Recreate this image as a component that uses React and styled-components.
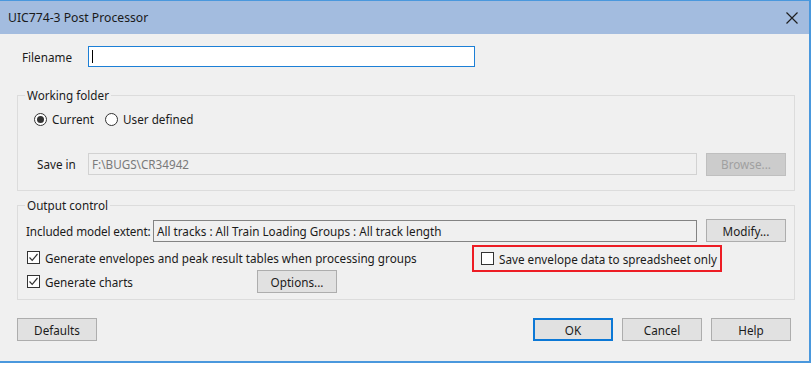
import React from "react";
import styled, { createGlobalStyle } from "styled-components";

const GlobalStyle = createGlobalStyle`
  html, body {
    margin: 0;
    padding: 0;
    background: #ffffff;
  }
  body {
    font-family: "Noto Sans", "Open Sans", sans-serif;
    font-size: 11.7px;
    color: #1b1b1b;
  }
`;

const Window = styled.div`
  width: 809px;
  height: 360px;
  display: flex;
  flex-direction: column;
  background: #f0f0f0;
  border-top: 1px solid #4a98dd;
  border-right: 2px solid #4a98dd;
  border-bottom: 2px solid #4a98dd;
`;

const TitleBar = styled.div`
  height: 33px;
  flex: none;
  display: flex;
  align-items: center;
  justify-content: space-between;
  background: #a3bcdf;
  padding: 0 11px 0 8px;
  font-size: 12.2px;
  color: #1a1a1a;
`;

const Body = styled.div`
  flex: 1;
  display: flex;
  flex-direction: column;
  padding: 0 14px 0 17px;
`;

const Row = styled.div`
  display: flex;
  align-items: center;
  height: ${p => p.h || 22}px;
  margin-top: ${p => p.mt || 0}px;
  padding-left: ${p => p.pl || 0}px;
`;

const Label = styled.span`
  width: ${p => p.w}px;
  flex: none;
  white-space: nowrap;
  letter-spacing: ${p => p.ls || 0}px;
`;

const TextBox = styled.div`
  width: ${p => p.w}px;
  height: ${p => p.h || 22}px;
  box-sizing: border-box;
  display: flex;
  align-items: center;
  padding-left: 3px;
  white-space: nowrap;
  overflow: hidden;
  background: ${p => (p.variant === "edit" ? "#ffffff" : "#f0f0f0")};
  border: 1px solid
    ${p =>
      p.variant === "edit" ? "#1c7fd6" : p.variant === "disabled" ? "#d2d2d2" : "#838383"};
  color: ${p => (p.variant === "disabled" ? "#7a7a7a" : "#1b1b1b")};
`;

const Caret = styled.span`
  width: 1px;
  height: 13px;
  background: #000;
`;

const Button = styled.div`
  width: 80px;
  height: 23px;
  box-sizing: border-box;
  flex: none;
  display: flex;
  align-items: center;
  justify-content: center;
  background: ${p => (p.disabled ? "#cccccc" : "#e1e1e1")};
  border: 1px solid ${p => (p.primary ? "#0c78d6" : p.disabled ? "#bfbfbf" : "#adadad")};
  box-shadow: ${p => (p.primary ? "inset 0 0 0 1px #0c78d6" : "none")};
  color: ${p => (p.disabled ? "#a0a0a0" : "#1b1b1b")};
  margin-left: ${p => p.ml || 0}px;
`;

const Group = styled.fieldset`
  margin: ${p => p.mt || 0}px 0 0 0;
  padding: 0;
  border: 1px solid #dcdcdc;
  min-width: 0;
`;

const Legend = styled.legend`
  margin-left: 7px;
  padding: 0 2px;
  line-height: 16px;
`;

const GroupBody = styled.div`
  display: flex;
  flex-direction: column;
  padding-bottom: ${p => p.pb || 0}px;
`;

const RadioItem = styled.label`
  display: flex;
  align-items: center;
  gap: 5px;
  margin-right: 11px;
`;

const RadioDot = styled.span`
  width: 13px;
  height: 13px;
  box-sizing: border-box;
  border-radius: 50%;
  border: 1px solid #333333;
  background: #ffffff;
  display: flex;
  align-items: center;
  justify-content: center;
  &::after {
    content: "";
    width: 7px;
    height: 7px;
    border-radius: 50%;
    background: ${p => (p.checked ? "#333333" : "transparent")};
  }
`;

const CheckItem = styled.label`
  display: flex;
  align-items: center;
  gap: 5px;
  white-space: nowrap;
  width: ${p => (p.w ? `${p.w}px` : "auto")};
  flex: none;
`;

const Box = styled.span`
  width: 13px;
  height: 13px;
  box-sizing: border-box;
  border: 1px solid #333333;
  background: #ffffff;
  display: flex;
  align-items: center;
  justify-content: center;
  flex: none;
`;

const Highlight = styled.div`
  width: 250px;
  height: 27px;
  box-sizing: border-box;
  border: 2px solid #ed1c24;
  display: flex;
  align-items: center;
  padding-left: 7px;
  align-self: flex-start;
  margin-bottom: -2px;
`;

const Footer = styled.div`
  display: flex;
  justify-content: space-between;
  margin-top: 18px;
`;

const ButtonGroup = styled.div`
  display: flex;
  margin-right: 4px;
`;

const Radio = ({ checked, children }) => (
  <RadioItem>
    <RadioDot checked={checked} />
    {children}
  </RadioItem>
);

const Check = ({ checked, w, children }) => (
  <CheckItem w={w}>
    <Box>
      {checked && (
        <svg width="11" height="11" viewBox="0 0 11 11">
          <polyline points="1.5,5.5 4.2,8.3 9.5,2" fill="none" stroke="#333" strokeWidth="1.2" />
        </svg>
      )}
    </Box>
    {children}
  </CheckItem>
);

const CloseIcon = () => (
  <svg width="12" height="12" viewBox="0 0 12 12">
    <path d="M0.5 0.5 L11.5 11.5 M11.5 0.5 L0.5 11.5" stroke="#1f1f1f" strokeWidth="1.2" />
  </svg>
);

export default function App() {
  return (
    <>
      <GlobalStyle />
      <Window>
        <TitleBar>
          <span>UIC774-3 Post Processor</span>
          <CloseIcon />
        </TitleBar>
        <Body>
          <Row mt={12} pl={5} h={21}>
            <Label w={66}>Filename</Label>
            <TextBox variant="edit" w={387} h={21}>
              <Caret />
            </TextBox>
          </Row>

          <Group mt={20}>
            <Legend>Working folder</Legend>
            <GroupBody pb={15}>
              <Row mt={8} pl={16} h={16}>
                <Radio checked>Current</Radio>
                <Radio>User defined</Radio>
              </Row>
              <Row mt={26} pl={19} h={22}>
                <Label w={51}>Save in</Label>
                <TextBox variant="disabled" w={609}>F:\BUGS\CR34942</TextBox>
                <Button disabled ml={9}>Browse...</Button>
              </Row>
            </GroupBody>
          </Group>

          <Group mt={6}>
            <Legend>Output control</Legend>
            <GroupBody pb={6}>
              <Row mt={6} pl={8} h={23}>
                <Label w={127} ls={-0.1}>Included model extent:</Label>
                <TextBox variant="readonly" w={544}>
                  All tracks : All Train Loading Groups : All track length
                </TextBox>
                <Button ml={9}>Modify...</Button>
              </Row>
              <Row mt={3} pl={9} h={25}>
                <Check checked w={445}>
                  Generate envelopes and peak result tables when processing groups
                </Check>
                <Highlight>
                  <Check>Save envelope data to spreadsheet only</Check>
                </Highlight>
              </Row>
              <Row pl={9} h={23}>
                <Check checked w={230}>
                  Generate charts
                </Check>
                <Button>Options...</Button>
              </Row>
            </GroupBody>
          </Group>

          <Footer>
            <Button>Defaults</Button>
            <ButtonGroup>
              <Button primary>OK</Button>
              <Button ml={9}>Cancel</Button>
              <Button ml={9}>Help</Button>
            </ButtonGroup>
          </Footer>
        </Body>
      </Window>
    </>
  );
}
